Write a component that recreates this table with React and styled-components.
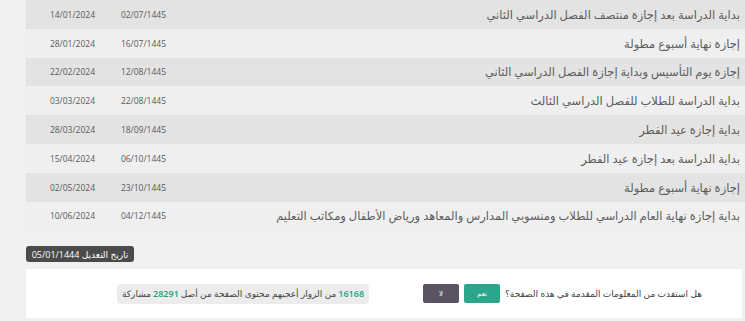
import styled, { createGlobalStyle } from 'styled-components'

const GlobalStyle = createGlobalStyle`
  html, body {
    margin: 0;
    padding: 0;
    background: #f0f0f0;
    overflow: hidden;
  }
  body {
    font-family: 'Open Sans', 'DejaVu Sans', sans-serif;
  }
`

const events = [
  ['بداية الدراسة بعد إجازة منتصف الفصل الدراسي الثاني', '02/07/1445', '14/01/2024'],
  ['إجازة نهاية أسبوع مطولة', '16/07/1445', '28/01/2024'],
  ['إجازة يوم التأسيس وبداية إجازة الفصل الدراسي الثاني', '12/08/1445', '22/02/2024'],
  ['بداية الدراسة للطلاب للفصل الدراسي الثالث', '22/08/1445', '03/03/2024'],
  ['بداية إجازة عيد الفطر', '18/09/1445', '28/03/2024'],
  ['بداية الدراسة بعد إجازة عيد الفطر', '06/10/1445', '15/04/2024'],
  ['إجازة نهاية أسبوع مطولة', '23/10/1445', '02/05/2024'],
  [
    'بداية إجازة نهاية العام الدراسي للطلاب ومنسوبي المدارس والمعاهد ورياض الأطفال ومكاتب التعليم',
    '04/12/1445',
    '10/06/2024',
  ],
]

export default function App() {
  return (
    <>
      <GlobalStyle />
      <Page dir="rtl">
        <Table>
          {events.map(([title, hijri, greg], i) => (
            <Row key={i} $striped={i % 2 === 0}>
              <EventCell>{title}</EventCell>
              <DateCell>{hijri}</DateCell>
              <DateCell>{greg}</DateCell>
            </Row>
          ))}
        </Table>

        <BadgeWrap>
          <Badge>تاريخ التعديل 05/01/1444</Badge>
        </BadgeWrap>

        <FeedbackCard>
          <QuestionGroup>
            <Question>هل استفدت من المعلومات المقدمة في هذه الصفحة؟</Question>
            <VoteButton type="button" $variant="yes">
              نعم
            </VoteButton>
            <VoteButton type="button" $variant="no">
              لا
            </VoteButton>
          </QuestionGroup>
          <StatsPill>
            <Count>16168</Count> من الزوار أعجبهم محتوى الصفحة من أصل <Count>28291</Count> مشاركة
          </StatsPill>
        </FeedbackCard>
      </Page>
    </>
  )
}

const Page = styled.div`
  display: flex;
  flex-direction: column;
  align-items: flex-start;
  width: 745px;
  color: #4d4d4d;
`

const Table = styled.div`
  display: flex;
  flex-direction: column;
  width: 719px;
`

const Row = styled.div`
  display: grid;
  grid-template-columns: 1fr 71px 74px;
  align-items: center;
  height: 28.8px;
  background: ${(props) => (props.$striped ? '#e3e3e3' : '#efefef')};
`

const EventCell = styled.div`
  padding-right: 5px;
  font-size: 11.5px;
  color: #5c5c5c;
  white-space: nowrap;
`

const DateCell = styled.div`
  padding-right: 5px;
  font-size: 8.5px;
  color: #5a5a5a;
`

const BadgeWrap = styled.div`
  display: flex;
  justify-content: flex-end;
  width: 719px;
  margin-top: 16px;
`

const Badge = styled.div`
  width: 108px;
  height: 16px;
  display: flex;
  align-items: center;
  justify-content: center;
  background: #4b4b4b;
  color: #fff;
  font-size: 9px;
  border-radius: 3px;
`

const FeedbackCard = styled.div`
  display: flex;
  align-items: center;
  gap: 54px;
  box-sizing: border-box;
  width: 716px;
  height: 49px;
  margin-top: 7px;
  margin-right: 3px;
  padding: 0 40px;
  background: #fff;
`

const QuestionGroup = styled.div`
  display: flex;
  align-items: center;
  gap: 5px;
`

const Question = styled.span`
  font-size: 9px;
  color: #3f3f3f;
  white-space: nowrap;
`

const VoteButton = styled.button`
  width: 36px;
  height: 19px;
  border: none;
  border-radius: 2px;
  padding: 0;
  font-family: inherit;
  font-size: 7px;
  color: #fff;
  background: ${(props) => (props.$variant === 'yes' ? '#2ca68a' : '#5a5462')};
`

const StatsPill = styled.div`
  display: flex;
  align-items: center;
  gap: 2px;
  height: 20px;
  padding: 0 5px;
  border-radius: 4px;
  background: #ececec;
  font-size: 9px;
  color: #444;
  white-space: nowrap;
`

const Count = styled.span`
  color: #23a07e;
  font-weight: 600;
`
